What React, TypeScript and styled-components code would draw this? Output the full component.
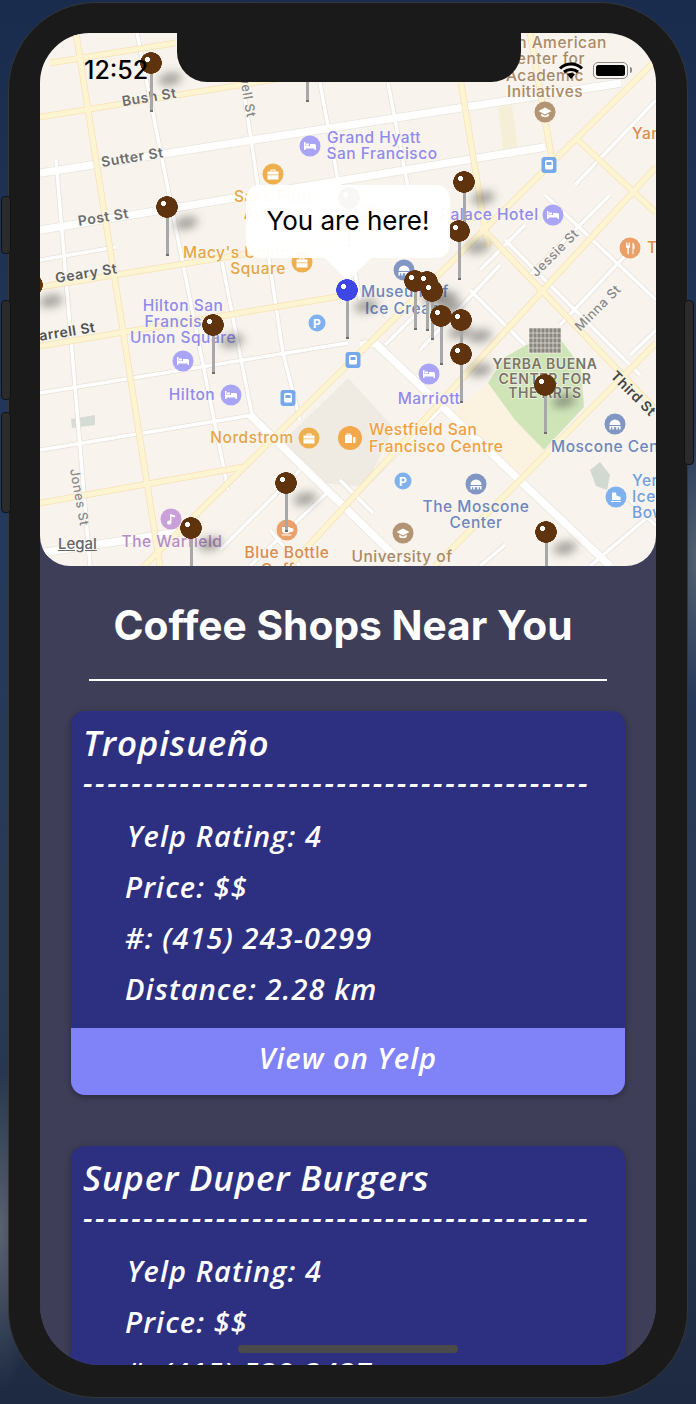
import React from "react";
import styled, { createGlobalStyle } from "styled-components";

const GlobalStyle = createGlobalStyle`
  html, body {
    margin: 0;
    padding: 0;
    background: #1b2b4a;
  }
  * {
    box-sizing: border-box;
  }
`;

type Road = [number, number, number, number];

// map coordinates are page pixels, the svg viewBox starts at the map corner
const thinWhite: Road[] = [
  [137, 33, 228, 490],
  [235, 33, 283, 353],
  [222, 262, 252, 415],
  [320, 83, 337, 175],
  [388, 83, 408, 187],
  [56, 160, 90, 566],
  [40, 393, 348, 343],
  [40, 450, 253, 415],
  [40, 260, 116, 247],
  [337, 175, 360, 300],
  [283, 353, 300, 420],
  [545, 195, 656, 300],
  [505, 240, 640, 375],
  [470, 290, 525, 345],
  [656, 100, 575, 185],
  [610, 195, 530, 275],
  [640, 240, 560, 325],
  [525, 225, 480, 270],
  [656, 330, 630, 355],
  [500, 265, 420, 350],
  [430, 300, 385, 345],
  [656, 510, 590, 566],
  [440, 410, 340, 510],
  [330, 490, 250, 566],
  [300, 470, 220, 550],
  [505, 545, 480, 566],
  [340, 480, 373, 513],
  [630, 500, 656, 526],
  [270, 530, 300, 566],
];

const thickWhite: Road[] = [
  [40, 173, 621, 83],
  [40, 230, 545, 147],
  [375, 343, 610, 566],
  [250, 415, 405, 566],
  [40, 553, 180, 532],
  [360, 345, 375, 343],
];

const yellowRoads: Road[] = [
  [76, 33, 160, 566],
  [40, 117, 290, 77],
  [50, 63, 175, 43],
  [40, 287, 345, 238],
  [345, 238, 490, 215],
  [40, 503, 243, 467],
  [656, 60, 143, 567],
  [656, 343, 435, 566],
  [656, 167, 290, 566],
  [578, 140, 656, 213],
  [481, 227, 656, 410],
  [461, 83, 488, 247],
  [530, 33, 553, 165],
  [40, 346, 348, 295],
];

const blocks = [
  { points: "451,413 488,383 545,450 515,480", fill: "#fbf3df" },
  { points: "488,383 505,357 530,343 561,340 581,367 584,407 544,450 515,420", fill: "#cfe5b8" },
  { points: "277,447 348,378 394,428 365,487 323,483", fill: "#efeae2" },
  { points: "498,107 512,105 518,148 503,150", fill: "#f6efd8" },
  { points: "71,419 95,415 95,425 72,428", fill: "#d5dbd5" },
  { points: "590,470 600,462 610,475 607,490 596,486", fill: "#d2d9d0" },
];

type Label = {
  text: string;
  x: number;
  y: number;
  color: string;
  size?: number;
  rotate?: number;
  anchor?: "start" | "middle" | "end";
  weight?: number;
};

const streetGrey = "#6d6d6d";
const hotelPurple = "#9289ec";
const shopOrange = "#e3a64a";
const museumBlue = "#6e86bd";
const schoolBrown = "#a98a68";
const cafeOrange = "#d98c50";

const labels: Label[] = [
  { text: "Bush St", x: 150, y: 102, color: streetGrey, rotate: -9, weight: 600, size: 14 },
  { text: "Sutter St", x: 133, y: 162, color: streetGrey, rotate: -9, weight: 600, size: 14 },
  { text: "Post St", x: 104, y: 222, color: streetGrey, rotate: -9, weight: 600, size: 14 },
  { text: "Geary St", x: 87, y: 278, color: "#5f5f5f", rotate: -9, weight: 600, size: 14 },
  { text: "Farrell St", x: 96, y: 332, color: "#4f4f4f", rotate: -9, weight: 600, anchor: "end", size: 14 },
  { text: "Powell St", x: 247, y: 118, color: "#888888", rotate: 80, anchor: "end", size: 13 },
  { text: "Jones St", x: 75, y: 498, color: "#8a8a8a", rotate: 80, size: 13 },
  { text: "Jessie St", x: 558, y: 256, color: "#888888", rotate: -45, size: 13 },
  { text: "Minna St", x: 601, y: 311, color: "#888888", rotate: -45, size: 13 },
  { text: "Third St", x: 630, y: 397, color: "#444444", rotate: 45, weight: 600, size: 14 },
  { text: "Grand Hyatt", x: 374, y: 143, color: hotelPurple },
  { text: "San Francisco", x: 382, y: 159, color: hotelPurple },
  { text: "Saks Fifth", x: 273, y: 202, color: shopOrange },
  { text: "Avenue", x: 273, y: 219, color: shopOrange },
  { text: "Macy's Union", x: 183, y: 258, color: shopOrange, anchor: "start" },
  { text: "Square", x: 258, y: 274, color: shopOrange },
  { text: "Hilton San", x: 183, y: 311, color: hotelPurple },
  { text: "Francisco", x: 183, y: 327, color: hotelPurple },
  { text: "Union Square", x: 183, y: 343, color: hotelPurple },
  { text: "Hilton", x: 192, y: 400, color: hotelPurple },
  { text: "Nordstrom", x: 252, y: 443, color: shopOrange },
  { text: "Westfield San", x: 369, y: 435, color: "#f0a040", anchor: "start" },
  { text: "Francisco Centre", x: 369, y: 452, color: "#f0a040", anchor: "start" },
  { text: "The Moscone", x: 476, y: 512, color: museumBlue },
  { text: "Center", x: 476, y: 528, color: museumBlue },
  { text: "University of", x: 402, y: 562, color: schoolBrown },
  { text: "Blue Bottle", x: 287, y: 558, color: cafeOrange },
  { text: "Coffee", x: 287, y: 575, color: cafeOrange },
  { text: "The Warfield", x: 172, y: 547, color: "#b58cc8" },
  { text: "Marriott", x: 429, y: 404, color: hotelPurple },
  { text: "Museum of", x: 361, y: 297, color: museumBlue, anchor: "start" },
  { text: "Ice Cream", x: 365, y: 314, color: museumBlue, anchor: "start" },
  { text: "Palace Hotel", x: 440, y: 220, color: hotelPurple, anchor: "start" },
  { text: "YERBA BUENA", x: 545, y: 369, color: "#7a7568", size: 14, weight: 600 },
  { text: "CENTER FOR", x: 545, y: 384, color: "#7a7568", size: 14, weight: 600 },
  { text: "THE ARTS", x: 545, y: 398, color: "#7a7568", size: 14, weight: 600 },
  { text: "Moscone Center", x: 551, y: 452, color: museumBlue, anchor: "start" },
  { text: "Yerba", x: 632, y: 486, color: "#6f9fe0", anchor: "start" },
  { text: "Ice", x: 632, y: 502, color: "#6f9fe0", anchor: "start" },
  { text: "Bowl", x: 632, y: 518, color: "#6f9fe0", anchor: "start" },
  { text: "Asian American", x: 545, y: 48, color: schoolBrown },
  { text: "Center for", x: 545, y: 64, color: schoolBrown },
  { text: "Academic", x: 545, y: 81, color: schoolBrown },
  { text: "Initiatives", x: 545, y: 97, color: schoolBrown },
  { text: "Yank", x: 632, y: 139, color: cafeOrange, anchor: "start" },
  { text: "Tropi", x: 647, y: 253, color: cafeOrange, anchor: "start" },
];

// white glyphs of the map markers, drawn in a 14x14 box
const glyphs = {
  bed: "M1 3h1.5v4H7V5h4.5A1.5 1.5 0 0 1 13 6.5V11h-1.5V9.5h-9V11H1z M3 4.5h3v2H3z",
  bag: "M1.5 4.5h11v8h-11z M1.5 7.6h11v.7h-11z M4.5 4.5v-2h5v2h-1v-1h-3v1z",
  shop: "M2 4h7v8H2z M3.5 4V2.5h4V4h-1v-.5h-2V4z M10 6h2.5v6H10z",
  cup: "M2 4h8v1h1.5a2 2 0 0 1 0 4H9.8c-.4 1-1.2 1.5-2.3 1.5h-3C3 10.5 2 9 2 7.5z M1.5 11.5h10v1h-10z",
  school: "M7 2.5L13.5 6 7 9.5.5 6z M3.2 8.6L7 10.7l3.8-2.1V11c-2 1.6-5.6 1.6-7.6 0z",
  dome: "M1.5 8a5.5 5.5 0 0 1 11 0z M1.5 9h11v3.5H11v-2.3H9.7v2.3H8.2v-2.3H5.8v2.3H4.3v-2.3H3v2.3H1.5z",
  music: "M6 2l5 1.5v2L7.5 4.5v6a2.2 2 0 1 1-1.5-1.8z",
  food: "M3 1.5h.8v3h.8v-3h.8v3h.8v-3h.8v4.2c0 .8-.6 1.3-1.2 1.5V13H4.4V7.2C3.6 7 3 6.5 3 5.7z M9.5 1.5c1.5.3 2 2 2 4v2.2h-1V13h-1z",
  skate: "M3 2.5h4l.5 3 4 1.5v3H3z M2 11h10v1H2z",
  train: "M3 4a2 2 0 0 1 2-2h4a2 2 0 0 1 2 2v6a1.5 1.5 0 0 1-1.5 1.5h-5A1.5 1.5 0 0 1 3 10z M4.5 4v3h5V4z",
};

type Poi = { kind: keyof typeof glyphs; x: number; y: number; fill: string; r?: number };

const pois: Poi[] = [
  { kind: "bed", x: 310, y: 146, fill: "#a9a4f5" },
  { kind: "bag", x: 273, y: 174, fill: "#eeb04f" },
  { kind: "bag", x: 302, y: 262, fill: "#eeb04f" },
  { kind: "bed", x: 183, y: 361, fill: "#a9a4f5" },
  { kind: "bed", x: 231, y: 395, fill: "#a9a4f5" },
  { kind: "bag", x: 309, y: 438, fill: "#eeb04f" },
  { kind: "shop", x: 350, y: 438, fill: "#f3a94b", r: 12 },
  { kind: "dome", x: 476, y: 484, fill: "#8296c4" },
  { kind: "school", x: 403, y: 533, fill: "#b39473" },
  { kind: "cup", x: 287, y: 530, fill: "#e9a06a" },
  { kind: "music", x: 171, y: 519, fill: "#c9a0d8" },
  { kind: "bed", x: 429, y: 374, fill: "#a9a4f5" },
  { kind: "dome", x: 404, y: 270, fill: "#8296c4" },
  { kind: "bed", x: 553, y: 215, fill: "#a9a4f5" },
  { kind: "dome", x: 615, y: 424, fill: "#8296c4" },
  { kind: "school", x: 545, y: 112, fill: "#b39473" },
  { kind: "food", x: 630, y: 248, fill: "#eaa066" },
  { kind: "skate", x: 616, y: 497, fill: "#7eb1ee" },
];

const parkingSpots = [
  [317, 323],
  [403, 481],
];

const trainStops = [
  [288, 398],
  [353, 360],
  [549, 165],
];

// head centre of each pin, in page pixels; later pins lie on top
const pins = [
  { x: 151, y: 63 },
  { x: 307, y: 53 },
  { x: 464, y: 182 },
  { x: 349, y: 198 },
  { x: 167, y: 207 },
  { x: 459, y: 231 },
  { x: 32, y: 285 },
  { x: 415, y: 281 },
  { x: 427, y: 282 },
  { x: 432, y: 291 },
  { x: 461, y: 320 },
  { x: 441, y: 316 },
  { x: 461, y: 354 },
  { x: 213, y: 325 },
  { x: 545, y: 385 },
  { x: 286, y: 483 },
  { x: 191, y: 528 },
  { x: 546, y: 532 },
];

const shops = [
  {
    name: "Tropisueño",
    rating: 4,
    price: "$$",
    phone: "(415) 243-0299",
    distance: "2.28 km",
  },
  {
    name: "Super Duper Burgers",
    rating: 4,
    price: "$$",
    phone: "(415) 538-3437",
    distance: "2.31 km",
  },
];

const App = () => {
  return (
    <Page>
      <GlobalStyle />
      <SideButton $side="left" $top={196} $height={58} />
      <SideButton $side="left" $top={300} $height={100} />
      <SideButton $side="left" $top={412} $height={101} />
      <SideButton $side="right" $top={300} $height={165} />
      <Phone>
        <Screen>
          <Notch />
          <StatusBar>
            <Clock>12:52</Clock>
            <StatusIcons>
              <svg width="26" height="19" viewBox="0 0 26 19">
                <path
                  d="M2 7.5 C8 1.5 18 1.5 24 7.5 M6 11 C10 7.5 16 7.5 20 11"
                  fill="none"
                  stroke="#000"
                  strokeWidth="3"
                />
                <path d="M9 13.2 C11.5 11.6 14.5 11.6 17 13.2 L13 18 Z" fill="#000" />
              </svg>
              <Battery>
                <BatteryFill />
              </Battery>
            </StatusIcons>
          </StatusBar>
          <MapArea>
            <MapDrawing />
            {pins.map((pin) => (
              <Pin key={`${pin.x}-${pin.y}`} $x={pin.x - 40} $y={pin.y - 33} />
            ))}
            <Callout>You are here!</Callout>
            <Pin $x={307} $y={257} $current />
            <LegalLink>Legal</LegalLink>
          </MapArea>
          <Content>
            <Title>Coffee Shops Near You</Title>
            <Divider />
            {shops.map((shop) => (
              <Card key={shop.name}>
                <CardBody>
                  <ShopName>{shop.name}</ShopName>
                  <Dashes>{"-".repeat(42)}</Dashes>
                  <Detail $first>Yelp Rating: {shop.rating}</Detail>
                  <Detail>Price: {shop.price}</Detail>
                  <Detail>#: {shop.phone}</Detail>
                  <Detail>Distance: {shop.distance}</Detail>
                </CardBody>
                <YelpButton>View on Yelp</YelpButton>
              </Card>
            ))}
          </Content>
          <HomeIndicator />
        </Screen>
      </Phone>
    </Page>
  );
};

const MapDrawing = () => (
  <MapSvg viewBox="40 33 616 533">
    <rect x="40" y="33" width="616" height="533" fill="#f8f4ed" />
    {blocks.map((b) => (
      <polygon key={b.points} points={b.points} fill={b.fill} />
    ))}
    {thinWhite.map(([x1, y1, x2, y2]) => (
      <line key={`c${x1}${y1}${x2}`} x1={x1} y1={y1} x2={x2} y2={y2} stroke="#e6e1d8" strokeWidth="5" />
    ))}
    {thickWhite.map(([x1, y1, x2, y2]) => (
      <line key={`c${x1}${y1}${x2}`} x1={x1} y1={y1} x2={x2} y2={y2} stroke="#e9e4db" strokeWidth="9" />
    ))}
    {thinWhite.map(([x1, y1, x2, y2]) => (
      <line key={`w${x1}${y1}${x2}`} x1={x1} y1={y1} x2={x2} y2={y2} stroke="#fff" strokeWidth="3.5" />
    ))}
    {thickWhite.map(([x1, y1, x2, y2]) => (
      <line key={`w${x1}${y1}${x2}`} x1={x1} y1={y1} x2={x2} y2={y2} stroke="#fff" strokeWidth="7.5" />
    ))}
    {yellowRoads.map(([x1, y1, x2, y2]) => (
      <line key={`c${x1}${y1}${x2}`} x1={x1} y1={y1} x2={x2} y2={y2} stroke="#f8e0b6" strokeWidth="6.5" />
    ))}
    {yellowRoads.map(([x1, y1, x2, y2]) => (
      <line key={`y${x1}${y1}${x2}`} x1={x1} y1={y1} x2={x2} y2={y2} stroke="#fdf5d2" strokeWidth="5" />
    ))}
    <g fill="#8a8680" stroke="#f8f4ed" strokeWidth="0.6">
      <rect x="529" y="328" width="32" height="25" />
      <path
        d="M533 328v25M537 328v25M541 328v25M545 328v25M549 328v25M553 328v25M557 328v25M529 333h32M529 338h32M529 343h32M529 348h32"
        fill="none"
      />
    </g>
    {pois.map(({ kind, x, y, fill, r = 10.5 }) => (
      <g key={`${kind}${x}${y}`}>
        <circle cx={x} cy={y} r={r} fill={fill} />
        <path transform={`translate(${x - 7} ${y - 7})`} d={glyphs[kind]} fill="#fff" fillRule="evenodd" />
      </g>
    ))}
    {parkingSpots.map(([x, y]) => (
      <g key={`p${x}`}>
        <circle cx={x} cy={y} r="8.5" fill="#7eb1ee" />
        <PoiLetter x={x} y={y + 4.5}>
          P
        </PoiLetter>
      </g>
    ))}
    {trainStops.map(([x, y]) => (
      <g key={`t${x}`}>
        <rect x={x - 7.5} y={y - 8} width="15" height="16" rx="3" fill="#76a9ec" />
        <path transform={`translate(${x - 7} ${y - 7})`} d={glyphs.train} fill="#fff" fillRule="evenodd" />
      </g>
    ))}
    {labels.map((l) => (
      <MapLabel
        key={l.text}
        x={l.x}
        y={l.y}
        fill={l.color}
        fontSize={l.size ?? 15.5}
        fontWeight={l.weight ?? 500}
        textAnchor={l.anchor ?? "middle"}
        transform={l.rotate ? `rotate(${l.rotate} ${l.x} ${l.y})` : undefined}
      >
        {l.text}
      </MapLabel>
    ))}
  </MapSvg>
);

export default App;

const Page = styled.div`
  position: relative;
  width: 696px;
  height: 1404px;
  overflow: hidden;
  padding: 2px 8px 6px;
  background:
    radial-gradient(ellipse 40px 160px at 0 1230px, #5a6270 0%, rgba(90, 98, 112, 0) 100%),
    radial-gradient(ellipse 30px 140px at 696px 560px, #55606f 0%, rgba(85, 96, 111, 0) 100%),
    linear-gradient(180deg, #1a2c4e 0%, #243a5c 40%, #2a3a52 70%, #1d2a42 100%);
`;

const SideButton = styled.div<{ $side: "left" | "right"; $top: number; $height: number }>`
  position: absolute;
  top: ${(p) => p.$top}px;
  ${(p) => (p.$side === "left" ? "left: 1px;" : "right: 2px;")}
  z-index: 1;
  width: 10px;
  height: ${(p) => p.$height}px;
  background: #2b2b2b;
  border: 1px solid #121212;
  border-radius: 4px;
`;

const Phone = styled.div`
  position: relative;
  width: 680px;
  height: 1396px;
  padding: 30px 31px 32px;
  background: #1a1a1a;
  border: 1px solid #343638;
  border-radius: 88px;
`;

const Screen = styled.div`
  position: relative;
  height: 1332px;
  overflow: hidden;
  background: #3e3e58;
  border-radius: 50px 50px 60px 60px;
`;

const Notch = styled.div`
  position: absolute;
  top: 0;
  left: 137px;
  z-index: 3;
  width: 344px;
  height: 49px;
  background: #1a1a1a;
  border-radius: 0 0 30px 30px;
`;

const StatusBar = styled.div`
  position: absolute;
  top: 0;
  left: 0;
  z-index: 4;
  width: 100%;
  height: 50px;
  padding: 0 28px 0 44px;
  display: flex;
  align-items: center;
  justify-content: space-between;
`;

const Clock = styled.span`
  margin-top: 24px;
  font: 500 25px/28px Inter, sans-serif;
  color: #000;
`;

const StatusIcons = styled.div`
  margin-top: 25px;
  display: flex;
  align-items: center;
  gap: 9px;
`;

const Battery = styled.div`
  position: relative;
  width: 35px;
  height: 17px;
  padding: 2px;
  border: 1.5px solid #8a8a8a;
  border-radius: 5px;

  &::after {
    content: "";
    position: absolute;
    top: 4px;
    right: -5px;
    width: 2px;
    height: 6px;
    background: #8a8a8a;
    border-radius: 0 2px 2px 0;
  }
`;

const BatteryFill = styled.div`
  width: 100%;
  height: 100%;
  background: #000;
  border-radius: 2.5px;
`;

const MapArea = styled.div`
  position: relative;
  isolation: isolate;
  height: 533px;
  overflow: hidden;
  border-radius: 0 0 30px 30px;
`;

const MapSvg = styled.svg`
  position: relative;
  z-index: -2;
  display: block;
  width: 616px;
  height: 533px;
`;

const MapLabel = styled.text`
  font-family: Inter, sans-serif;
  paint-order: stroke;
  stroke: rgba(250, 247, 241, 0.8);
  stroke-width: 1.5px;
  letter-spacing: 0.5px;
`;

const PoiLetter = styled.text`
  font: 700 12px Inter, sans-serif;
  fill: #fff;
  text-anchor: middle;
`;

const Pin = styled.div<{ $x: number; $y: number; $current?: boolean }>`
  position: absolute;
  left: ${(p) => p.$x - 11}px;
  top: ${(p) => p.$y - 11}px;
  width: 22px;
  height: 58px;

  /* head with its highlight */
  background:
    radial-gradient(circle 2.6px at 7.5px 7.5px, #fff 90%, transparent 100%),
    radial-gradient(circle 11px at 11px 11px, ${(p) => (p.$current ? "#3f46e8" : "#5e330e")} 96%, transparent 100%);
  background-size: 22px 22px;
  background-repeat: no-repeat;

  /* stem */
  &::before {
    content: "";
    position: absolute;
    left: 9.5px;
    top: 22px;
    width: 3px;
    height: 36px;
    background: #a6a8aa;
    border-bottom: 2px solid #6f6f6f;
  }

  /* blurred shadow on the ground */
  &::after {
    content: "";
    position: absolute;
    left: 18px;
    top: 21px;
    width: 24px;
    height: 12px;
    background: rgba(50, 50, 50, 0.45);
    border-radius: 50%;
    filter: blur(5px);
    transform: rotate(-12deg);
    z-index: -1;
  }
`;

const Callout = styled.div`
  position: absolute;
  left: 206px;
  top: 152px;
  width: 204px;
  height: 73px;
  padding-bottom: 2px;
  display: flex;
  align-items: center;
  justify-content: center;
  background: rgba(255, 255, 255, 0.96);
  border-radius: 14px;
  font: 400 26px/30px Inter, sans-serif;
  color: #000;

  &::after {
    content: "";
    position: absolute;
    left: 79px;
    top: 73px;
    width: 46px;
    height: 23px;
    background: rgba(255, 255, 255, 0.96);
    clip-path: polygon(0 0, 100% 0, 50% 100%);
  }
`;

const LegalLink = styled.span`
  position: absolute;
  left: 18px;
  top: 502px;
  font: 500 15px/18px Inter, sans-serif;
  color: #666;
  text-decoration: underline;
`;

const Content = styled.div`
  padding: 36px 31px 0;
  background: #3e3e58;
`;

const Title = styled.h1`
  margin: 0;
  padding-right: 10px;
  font: 700 40.7px/48px Inter, sans-serif;
  color: #fff;
  text-align: center;
  white-space: nowrap;
`;

const Divider = styled.div`
  height: 2px;
  margin: 29px 18px 30px;
  background: #fff;
`;

const Card = styled.div`
  margin-bottom: 51px;
  overflow: hidden;
  background: #2d2f80;
  border-radius: 14px;
  box-shadow: 0 2px 6px rgba(0, 0, 0, 0.35);
  font-family: "Open Sans", sans-serif;
  font-style: italic;
  font-weight: 600;
  color: #fff;
`;

const CardBody = styled.div`
  padding: 10px 12px 14px;
`;

const ShopName = styled.div`
  font-size: 35px;
  line-height: 43px;
  letter-spacing: 0.8px;
  white-space: nowrap;
`;

const Dashes = styled.div`
  height: 41px;
  margin-bottom: 5px;
  font-size: 30px;
  line-height: 37px;
  letter-spacing: 2.55px;
  white-space: nowrap;
  overflow: hidden;
`;

const Detail = styled.div<{ $first?: boolean }>`
  padding-left: ${(p) => (p.$first ? 44 : 42)}px;
  font-size: 29px;
  line-height: 51px;
  letter-spacing: 1.1px;
  white-space: nowrap;
`;

const YelpButton = styled.div`
  height: 67px;
  padding-bottom: 9px;
  display: flex;
  align-items: center;
  justify-content: center;
  background: #8082f8;
  font-size: 29px;
  letter-spacing: 1px;
`;

const HomeIndicator = styled.div`
  position: absolute;
  left: 198px;
  bottom: 12px;
  width: 220px;
  height: 8px;
  background: #4a4a4a;
  border-radius: 4px;
`;
